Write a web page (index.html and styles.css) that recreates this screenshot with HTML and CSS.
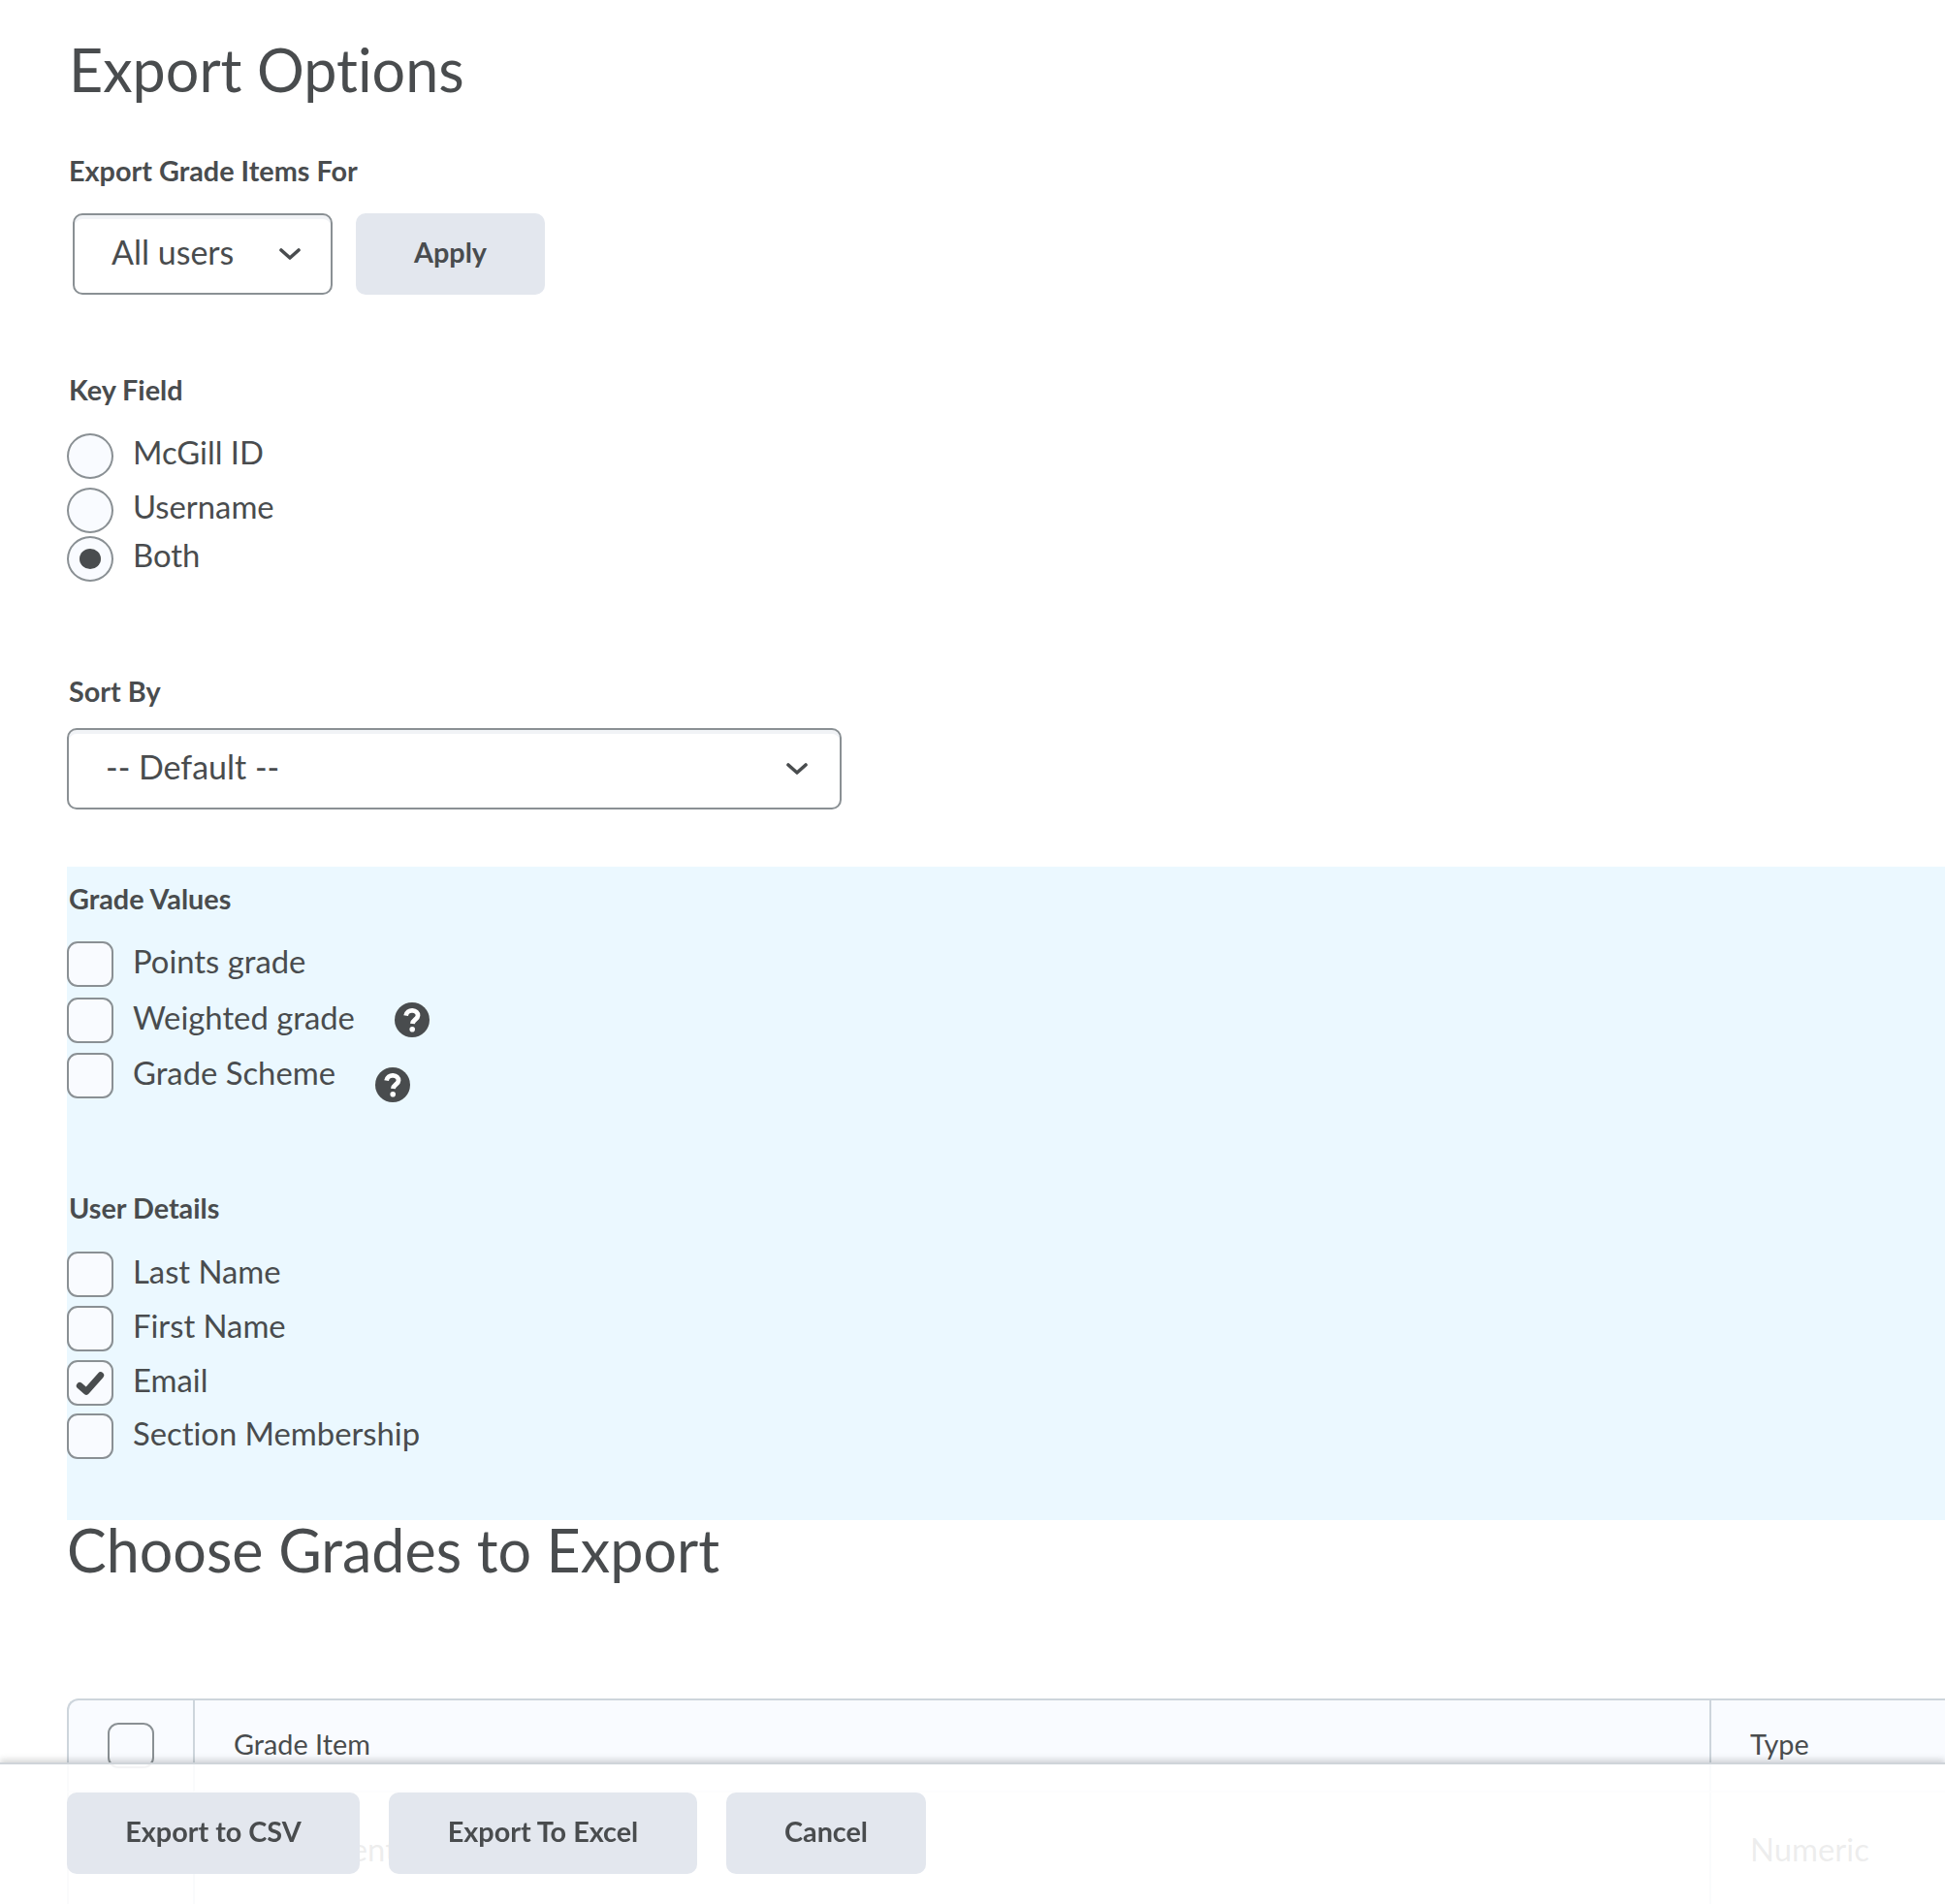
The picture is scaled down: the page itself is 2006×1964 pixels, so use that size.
FILE: index.html
```html
<!DOCTYPE html>
<html>
  <head>
    <meta charset="utf-8">
    <meta name="viewport" content="width=device-width">
    <title>Export Options</title>
    <link rel="stylesheet" href="styles.css">
  </head>
  <body>
    <main class="page">
      <h1>Export Options</h1>

      <div class="label">Export Grade Items For</div>
      <div class="apply-row">
        <div class="select select-users">
          <span>All users</span>
          <svg class="chevron" viewBox="0 0 22 14"><polyline points="2,3 11,11 20,3"/></svg>
        </div>
        <div class="btn btn-apply">Apply</div>
      </div>

      <div class="label key-label">Key Field</div>
      <div class="opt"><span class="radio"></span><span>McGill ID</span></div>
      <div class="opt opt-username"><span class="radio"></span><span>Username</span></div>
      <div class="opt opt-both"><span class="radio checked"></span><span>Both</span></div>

      <div class="label sort-label">Sort By</div>
      <div class="select select-sort">
        <span>-- Default --</span>
        <svg class="chevron" viewBox="0 0 22 14"><polyline points="2,3 11,11 20,3"/></svg>
      </div>

      <section class="panel">
        <div class="label">Grade Values</div>
        <div class="opts">
          <div class="opt"><span class="check"></span><span>Points grade</span></div>
          <div class="opt opt-g2">
            <span class="check"></span><span>Weighted grade</span>
            <svg class="help" viewBox="0 0 36 36"><circle cx="18" cy="18" r="18"/><path d="M11.6 13.6c.6-3.4 3.4-5.4 6.8-5.2 3.4.2 5.800 2.400 5.600 5.200-.2 4-5.200 4.200-5.600 8.400"/><circle class="dot" cx="18.200" cy="27.800" r="2.800"/></svg>
          </div>
          <div class="opt opt-g3">
            <span class="check"></span><span>Grade Scheme</span>
            <svg class="help help-low" viewBox="0 0 36 36"><circle cx="18" cy="18" r="18"/><path d="M11.6 13.6c.6-3.4 3.4-5.4 6.8-5.2 3.4.2 5.800 2.400 5.600 5.200-.2 4-5.200 4.200-5.600 8.400"/><circle class="dot" cx="18.200" cy="27.800" r="2.800"/></svg>
          </div>
        </div>

        <div class="label details-label">User Details</div>
        <div class="opts opts-details">
          <div class="opt"><span class="check"></span><span>Last Name</span></div>
          <div class="opt opt-u"><span class="check"></span><span>First Name</span></div>
          <div class="opt opt-u">
            <span class="check">
              <svg class="tick" viewBox="0 0 44 44"><polyline points="11,25 18,31 33,14"/></svg>
            </span>
            <span>Email</span>
          </div>
          <div class="opt opt-last"><span class="check"></span><span>Section Membership</span></div>
        </div>
      </section>

      <h2>Choose Grades to Export</h2>

      <table class="grades">
        <colgroup><col class="col-check"><col class="col-item"><col class="col-type"></colgroup>
        <thead>
          <tr>
            <th><span class="check"></span></th>
            <th>Grade Item</th>
            <th>Type</th>
          </tr>
        </thead>
        <tbody>
          <tr>
            <td><span class="check"></span></td>
            <td>Assignment</td>
            <td>Numeric</td>
          </tr>
        </tbody>
      </table>
    </main>

    <footer class="actions">
      <div class="btn btn-csv">Export to CSV</div>
      <div class="btn btn-excel">Export To Excel</div>
      <div class="btn btn-cancel">Cancel</div>
    </footer>
  </body>
</html>
```

FILE: styles.css
```css
* {
  box-sizing: border-box;
  margin: 0;
  padding: 0;
}
html, body {
  height: 1964px;
  overflow: hidden;
  background: #fff;
}
body {
  font-family: Lato, "Open Sans", sans-serif;
  font-size: 32.8px;
  font-variant-ligatures: none;
  color: #494c4e;
}
.page {
  padding-left: 69px;
}
h1, h2 {
  font-weight: 400;
  font-size: 61px;
}
h1 {
  line-height: 72px;
  padding-top: 36px;
  padding-left: 2px;
  box-sizing: content-box;
}
h2 {
  line-height: 60px;
  margin-top: 1px;
}
.label {
  font-size: 28.8px;
  font-weight: 700;
  line-height: 34px;
  padding-left: 2px;
}
h1 + .label {
  margin-top: 51px;
}
.apply-row {
  display: flex;
  gap: 24px;
  margin: 27px 0 0 6px;
}
.select {
  height: 84px;
  display: flex;
  align-items: center;
  justify-content: space-between;
  background: #fff;
  border: 2px solid #8a9094;
  border-radius: 10px;
  box-shadow: inset 0 4px 0 rgba(185, 194, 208, .2);
  font-size: 34px;
}
.select span {
  padding-bottom: 5px;
}
.select-users {
  width: 268px;
  padding: 0 31px 0 38px;
}
.select-sort {
  width: 799px;
  margin-top: 21px;
  padding: 0 33px 0 38px;
}
.chevron {
  width: 22px;
  height: 14px;
  fill: none;
  stroke: #494c4e;
  stroke-width: 3.6;
  stroke-linecap: round;
  stroke-linejoin: round;
}
.btn {
  height: 84px;
  display: flex;
  align-items: center;
  justify-content: center;
  background: #e3e7ee;
  border-radius: 10px;
  font-size: 28.8px;
  font-weight: 700;
  padding-bottom: 4px;
}
.btn-apply { width: 195px; }
.btn-csv { width: 302px; }
.btn-excel { width: 318px; }
.btn-cancel { width: 206px; }

.key-label {
  margin-top: 81px;
  margin-bottom: 28px;
}
.sort-label {
  margin-top: 96px;
}
.opt {
  display: flex;
  align-items: flex-start;
  gap: 20px;
  line-height: 40px;
}
.panel .opt {
  line-height: 42px;
}
.opt-username { margin-top: 9px; }
.opt-both { margin-top: 3px; }
.opt-g2 { margin-top: 11px; }
.opt-g3 { margin-top: 10px; }
.opt-u { margin-top: 9px; }
.opt-last { margin-top: 8px; }
.radio, .check {
  display: block;
  flex: none;
  width: 48px;
  height: 47px;
  background: #f9fbff;
  border: 2px solid #8a9094;
}
.radio {
  border-radius: 50%;
  position: relative;
}
.radio.checked::after {
  content: "";
  position: absolute;
  left: 11px;
  top: 11px;
  width: 22px;
  height: 21px;
  border-radius: 50%;
  background: #494c4e;
}
.check {
  border-radius: 11px;
}
.tick {
  display: block;
  width: 44px;
  height: 43px;
  fill: none;
  stroke: #494c4e;
  stroke-width: 7;
  stroke-linecap: round;
  stroke-linejoin: round;
}
.help {
  width: 36px;
  height: 36px;
  flex: none;
  margin-left: 21px;
  margin-top: 5px;
  fill: #494c4e;
}
.help path {
  fill: none;
  stroke: #fff;
  stroke-width: 4.8;
}
.help .dot {
  fill: #fff;
}
.help-low {
  margin-top: 15px;
}
.panel {
  background: #ebf8ff;
  margin-top: 59px;
  padding: 16px 0 63px;
}
.opts {
  margin-top: 27px;
}
.opts-details {
  margin-top: 28px;
}
.details-label {
  margin-top: 92px;
}
.grades {
  width: 2100px;
  margin-top: 123px;
  table-layout: fixed;
  border-collapse: separate;
  border-spacing: 0;
  font-size: 28.8px;
}
.col-check { width: 130px; }
.col-item { width: 1564px; }
.grades th {
  height: 97px;
  font-weight: 400;
  text-align: left;
  background: #f9fbff;
  border-top: 2px solid #cdd5dc;
  border-bottom: 2px solid #e6eaf0;
  border-left: 2px solid #cdd5dc;
  padding: 28px 0 0 40px;
  vertical-align: top;
}
.grades th:first-child {
  border-top-left-radius: 12px;
  padding: 23px 0 0 40px;
}
.grades td {
  height: 116px;
  border-left: 2px solid #cdd5dc;
  padding-left: 40px;
  font-size: 32.8px;
}
.actions {
  position: fixed;
  left: 0;
  right: 0;
  bottom: 0;
  height: 146px;
  padding: 29px 0 0 69px;
  display: flex;
  gap: 30px;
  background: rgba(255, 255, 255, .9);
  border-top: 2px solid #cfd4d9;
  box-shadow: 0 -3px 6px rgba(73, 76, 78, .22);
}
```
